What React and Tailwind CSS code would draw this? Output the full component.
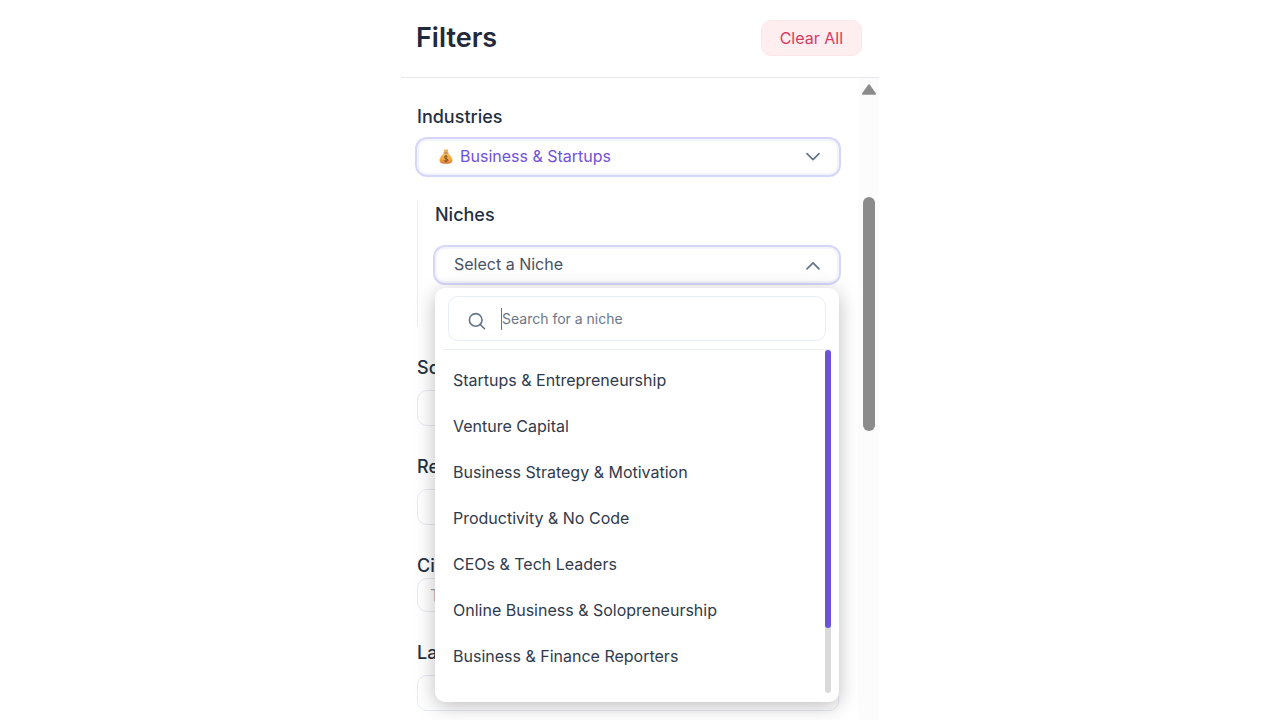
import React, { useState } from "react";

const NICHES = [
  "Startups & Entrepreneurship",
  "Venture Capital",
  "Business Strategy & Motivation",
  "Productivity & No Code",
  "CEOs & Tech Leaders",
  "Online Business & Solopreneurship",
  "Business & Finance Reporters",
];

const labelClass = "block w-fit pt-px text-lg leading-6 font-medium text-[#243042]";
const focusClass =
  "h-10 rounded-xl border-2 border-[#d5d6fa] bg-white inset-ring-2 inset-ring-[#f2f5fd]";
const fieldClass =
  "block w-full appearance-none rounded-[10px] border border-[#e6eaf2] bg-white px-3 text-base text-[#3b4658]";

function Chevron({ up }) {
  return (
    <svg className="h-4 w-4 shrink-0 pointer-events-none" viewBox="0 0 16 16" fill="none" stroke="#64748b" strokeWidth="1.7" strokeLinecap="round" strokeLinejoin="round" aria-hidden="true">
      <path d={up ? "M2 11.8 8 5.8l6 6" : "M2 4.700l6 6 6-6"} />
    </svg>
  );
}

function MoneyBag() {
  return (
    <svg className="h-4 w-4 shrink-0" viewBox="0 0 16 16" aria-hidden="true">
      <defs>
        <linearGradient id="bag" x1="0" y1="0" x2="0" y2="1">
          <stop offset="0" stopColor="#f8bd55" />
          <stop offset="0.6" stopColor="#f2a544" />
          <stop offset="1" stopColor="#dc7430" />
        </linearGradient>
      </defs>
      <path d="M5.800.8c.8-.6 1.300.2 2.200 0 .9-.2 1.600-.6 2.200.1.300.7-.7 1.700-.8 2.900H6.600C6.500 2.600 5.500 1.600 5.800.8z" fill="#efae50" />
      <path d="M6.500 4.200h3c2.200 1.400 5 4.300 5 7 0 2.600-2.600 3.600-6.500 3.600s-6.500-1-6.500-3.600c0-2.700 2.800-5.600 5-7z" fill="url(#bag)" />
      <path d="M6 4h4" stroke="#a3642e" strokeWidth="1.100" strokeLinecap="round" />
      <path d="M9.600 7.900c-.3-.6-.9-.9-1.600-.9-1 0-1.700.5-1.700 1.300 0 1.800 3.500.8 3.500 2.700 0 .9-.8 1.400-1.800 1.400-.9 0-1.600-.4-1.900-1.100M8 6.100v7.200" fill="none" stroke="#75502b" strokeWidth="1" />
    </svg>
  );
}

function SearchIcon() {
  return (
    <svg className="mt-1 h-[18px] w-[18px] shrink-0" viewBox="0 0 18 18" fill="none" stroke="#64748b" strokeWidth="1.600" strokeLinecap="round" aria-hidden="true">
      <circle cx="7.700" cy="7.900" r="6.300" />
      <path d="m12.300 12.500 4.200 4.200" />
    </svg>
  );
}

function NicheMenu({ onSelect }) {
  const [query, setQuery] = useState("");
  const items = NICHES.filter((n) => n.toLowerCase().includes(query.toLowerCase()));

  return (
    <div className="absolute inset-x-[2px] top-full z-10 mt-[3px] rounded-[10px] bg-white px-2 pt-2 pb-[9px] shadow-[0_4px_20px_rgba(0,0,0,0.26)]">
      <div className="mx-[5px] flex h-[45px] items-center rounded-[10px] border border-[#e9edf6] pl-[19px]">
        <SearchIcon />
        <span className="ml-[15px] h-[22px] w-px bg-[#64748b]" />
        <input
          type="text"
          aria-label="Search for a niche"
          placeholder="Search for a niche"
          value={query}
          onChange={(e) => setQuery(e.target.value)}
          className="min-w-0 flex-1 bg-transparent text-sm text-[#243042] outline-none placeholder:text-[#6b7789]"
        />
      </div>
      <div className="mt-2 flex border-t border-[#e9edf4]">
        <ul className="flex-1 pt-[7px] pb-[14px]">
          {items.map((name) => (
            <li key={name}>
              <button
                type="button"
                onClick={() => onSelect(name)}
                className="h-[46px] w-full px-[10px] text-left text-base text-[#2f3a4c]"
              >
                {name}
              </button>
            </li>
          ))}
        </ul>
        <div className="w-[6px] rounded-full bg-[#d9d9d9]">
          <div className="h-[81%] rounded-full bg-[#6b52d9]" />
        </div>
      </div>
    </div>
  );
}

export default function App() {
  const [open, setOpen] = useState(true);
  const [niche, setNiche] = useState("");

  const selectNiche = (name) => {
    setNiche(name);
    setOpen(false);
  };

  return (
    <div className="min-h-screen bg-white font-['Inter',sans-serif]">
      <aside className="mx-auto flex min-h-screen w-full max-w-[478px] flex-col">
        <header className="flex items-center justify-between border-b border-[#e5e8ec] pt-5 pr-[17px] pb-[21px] pl-[15px]">
          <h1 className="text-[27px] leading-8 font-semibold text-[#1f2a3c]">Filters</h1>
          <button
            type="button"
            className="h-9 rounded-[10px] border border-[#fde6e8] bg-[#feeeef] px-[18px] text-base text-[#d93a63]"
          >
            Clear All
          </button>
        </header>

        <div className="flex flex-1">
          <form className="min-w-0 flex-1 pt-[26px] pr-[19px] pb-[10px] pl-4">
            <label htmlFor="industry" className={labelClass}>Industries</label>
            <div className={`-mx-[2px] mt-2 flex items-center pl-[21px] ${focusClass}`}>
              <MoneyBag />
              <select
                id="industry"
                className="-mr-9 h-full min-w-0 flex-1 appearance-none bg-transparent pr-9 pb-[2px] pl-[6px] text-base text-[#7051dc] outline-none"
              >
                <option>Business &amp; Startups</option>
              </select>
              <span className="pr-[18px] pointer-events-none">
                <Chevron />
              </span>
            </div>

            <div className="mt-6 border-l border-[#e9edf6] pb-[41px] pl-[17px] pt-px">
              <label htmlFor="niche" className={labelClass}>Niches</label>
              <div className="relative -mx-[2px] mt-[18px]">
                <button
                  id="niche"
                  type="button"
                  aria-expanded={open}
                  onClick={() => setOpen(!open)}
                  className={`flex w-full items-center justify-between pr-[18px] pl-[19px] text-base text-[#475265] ${focusClass}`}
                >
                  <span className="pb-[2px]">{niche || "Select a Niche"}</span>
                  <Chevron up={open} />
                </button>
                {open && <NicheMenu onSelect={selectNiche} />}
              </div>
            </div>

            <div className="mt-[29px] flex flex-col gap-7">
              <div>
                <label htmlFor="social" className={labelClass}>Social</label>
                <select id="social" className={`mt-[10px] h-9 ${fieldClass}`} />
              </div>
              <div>
                <label htmlFor="region" className={labelClass}>Region</label>
                <select id="region" className={`mt-[10px] h-9 ${fieldClass}`} />
              </div>
              <div>
                <label htmlFor="city" className={labelClass}>City</label>
                <input
                  id="city"
                  type="text"
                  placeholder="Type a city"
                  className={`h-[34px] placeholder:text-[#94a3b8] ${fieldClass}`}
                />
              </div>
              <div>
                <label htmlFor="language" className={labelClass}>Language</label>
                <select id="language" className={`mt-[10px] h-9 ${fieldClass}`} />
              </div>
            </div>
          </form>

          <div className="flex w-[21px] flex-col items-center bg-[#fcfcfc] pt-[6px]">
            <svg className="h-3 w-4" viewBox="0 0 16 12" aria-hidden="true">
              <path d="M8 1.300 14 9.800H2z" fill="#8b8b8b" stroke="#8b8b8b" strokeWidth="2" strokeLinejoin="round" />
            </svg>
            <div className="mt-[101px] h-[234px] w-3 rounded-full bg-[#8b8b8b]" />
          </div>
        </div>
      </aside>
    </div>
  );
}
